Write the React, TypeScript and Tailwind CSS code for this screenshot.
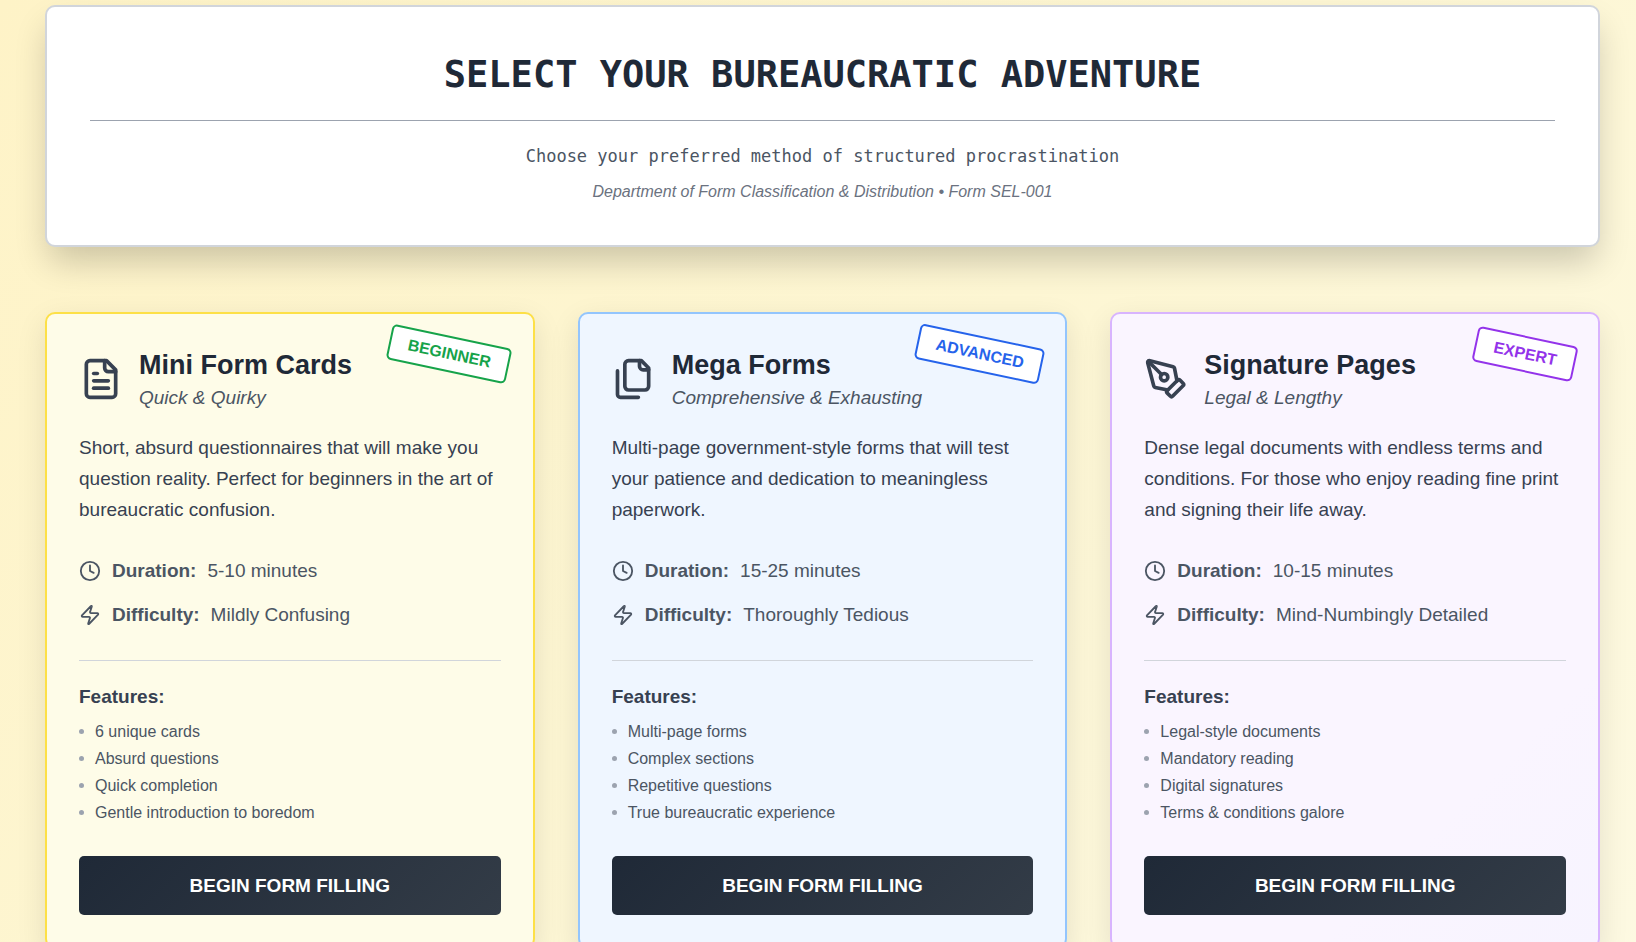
import { Clock, PenTool, Zap } from 'lucide-react'
import type { ReactNode } from 'react'

interface FormType {
  title: string
  subtitle: string
  description: string
  duration: string
  difficulty: string
  features: string[]
  level: string
  icon: ReactNode
  cardClass: string
  levelClass: string
}

const iconProps = {
  viewBox: '0 0 24 24',
  fill: 'none',
  stroke: 'currentColor',
  strokeWidth: 2,
  strokeLinecap: 'round' as const,
  strokeLinejoin: 'round' as const,
  className: 'size-11',
}

const FileTextIcon = () => (
  <svg {...iconProps}>
    <path d="M15 2H6a2 2 0 0 0-2 2v16a2 2 0 0 0 2 2h12a2 2 0 0 0 2-2V7Z" />
    <path d="M14 2v4a2 2 0 0 0 2 2h4" />
    <path d="M10 9H8" />
    <path d="M16 13H8" />
    <path d="M16 17H8" />
  </svg>
)

const FilesIcon = () => (
  <svg {...iconProps}>
    <path d="M20 7h-3a2 2 0 0 1-2-2V2" />
    <path d="M9 18a2 2 0 0 1-2-2V4a2 2 0 0 1 2-2h7l4 4v10a2 2 0 0 1-2 2Z" />
    <path d="M3 7.6v12.8A1.6 1.6 0 0 0 4.6 22h9.8" />
  </svg>
)

const formTypes: FormType[] = [
  {
    title: 'Mini Form Cards',
    subtitle: 'Quick & Quirky',
    description:
      'Short, absurd questionnaires that will make you question reality. Perfect for beginners in the art of bureaucratic confusion.',
    duration: '5-10 minutes',
    difficulty: 'Mildly Confusing',
    features: ['6 unique cards', 'Absurd questions', 'Quick completion', 'Gentle introduction to boredom'],
    level: 'BEGINNER',
    icon: <FileTextIcon />,
    cardClass: 'border-[#fde047] bg-[#fefce8]',
    levelClass: 'border-[#16a34a] text-[#16a34a]',
  },
  {
    title: 'Mega Forms',
    subtitle: 'Comprehensive & Exhausting',
    description:
      'Multi-page government-style forms that will test your patience and dedication to meaningless paperwork.',
    duration: '15-25 minutes',
    difficulty: 'Thoroughly Tedious',
    features: ['Multi-page forms', 'Complex sections', 'Repetitive questions', 'True bureaucratic experience'],
    level: 'ADVANCED',
    icon: <FilesIcon />,
    cardClass: 'border-[#93c5fd] bg-[#eff6ff]',
    levelClass: 'border-[#2563eb] text-[#2563eb]',
  },
  {
    title: 'Signature Pages',
    subtitle: 'Legal & Lengthy',
    description:
      'Dense legal documents with endless terms and conditions. For those who enjoy reading fine print and signing their life away.',
    duration: '10-15 minutes',
    difficulty: 'Mind-Numbingly Detailed',
    features: ['Legal-style documents', 'Mandatory reading', 'Digital signatures', 'Terms & conditions galore'],
    level: 'EXPERT',
    icon: <PenTool className="size-11" />,
    cardClass: 'border-[#d8b4fe] bg-[linear-gradient(135deg,#faf5ff_75%,#f7f4ff)]',
    levelClass: 'border-[#9333ea] text-[#9333ea]',
  },
]

function FormCard({ form }: { form: FormType }) {
  return (
    <article
      className={`relative rounded-[10px] border-2 p-8 shadow-[0_10px_30px_rgba(0,0,0,0.1)] ${form.cardClass}`}
    >
      {/* Level stamp */}
      <span
        className={`absolute top-[22px] right-[22px] rotate-12 rounded-[5px] border-2 bg-white px-[17px] py-1 text-base leading-6 font-bold ${form.levelClass}`}
      >
        {form.level}
      </span>

      <div className="flex items-center gap-4 text-[#374151]">
        {form.icon}
        <div>
          <h2 className="text-[27px] leading-[38px] font-bold text-[#1f2937]">{form.title}</h2>
          <p className="text-[19px] leading-7 text-[#4b5563] italic">{form.subtitle}</p>
        </div>
      </div>

      <p className="mt-5 text-[19px] leading-[31px] text-[#374151]">{form.description}</p>

      <div className="mt-8 space-y-4 text-[19px] leading-7 text-[#4b5563]">
        <div className="flex items-center gap-[11px]">
          <Clock className="size-[22px]" />
          <span className="font-bold">Duration:</span>
          <span>{form.duration}</span>
        </div>
        <div className="flex items-center gap-[11px]">
          <Zap className="size-[22px]" />
          <span className="font-bold">Difficulty:</span>
          <span>{form.difficulty}</span>
        </div>
      </div>

      <div className="mt-[31px] border-t border-[#d1d5db] pt-[22px]">
        <h3 className="text-[19px] leading-7 font-bold text-[#374151]">Features:</h3>
        <ul className="mt-[9px] space-y-1 text-base leading-[23px] text-[#4b5563]">
          {form.features.map((feature) => (
            <li key={feature} className="flex items-center gap-[11px]">
              <span className="size-[5px] rounded-full bg-[#9ca3af]" />
              {feature}
            </li>
          ))}
        </ul>
      </div>

      <button
        type="button"
        className="mt-8 w-full rounded-[5px] bg-[linear-gradient(135deg,#1f2937,#333c47)] py-4 text-[19px] leading-[27px] font-bold text-white"
      >
        BEGIN FORM FILLING
      </button>
    </article>
  )
}

export default function App() {
  return (
    <main className="min-h-screen bg-[linear-gradient(135deg,#fef3c7,#fdf6d3_50%,#fdf9e2)] pt-[5px] pr-9 pb-11 pl-[45px] font-['Liberation_Sans',Arial,sans-serif]">
      <header className="rounded-[10px] border-2 border-[#d1d5db] bg-white px-[43px] pt-[45px] pb-[41px] text-center shadow-[0_18px_34px_-4px_rgba(0,0,0,0.2)]">
        <h1 className="border-b border-[#9ca3af] pb-[23px] font-['DejaVu_Sans_Mono',monospace] text-[37px] leading-[45px] font-bold text-[#1f2937]">
          SELECT YOUR BUREAUCRATIC ADVENTURE
        </h1>
        <p className="mt-5 font-['DejaVu_Sans_Mono',monospace] text-[17px] leading-[30px] text-[#4b5563]">
          Choose your preferred method of structured procrastination
        </p>
        <p className="mt-[9px] text-base leading-6 text-[#6b7280] italic">
          Department of Form Classification &amp; Distribution • Form SEL-001
        </p>
      </header>

      {/* Form type selection */}
      <div className="mt-[65px] grid grid-cols-3 gap-[43px]">
        {formTypes.map((form) => (
          <FormCard key={form.title} form={form} />
        ))}
      </div>
    </main>
  )
}
